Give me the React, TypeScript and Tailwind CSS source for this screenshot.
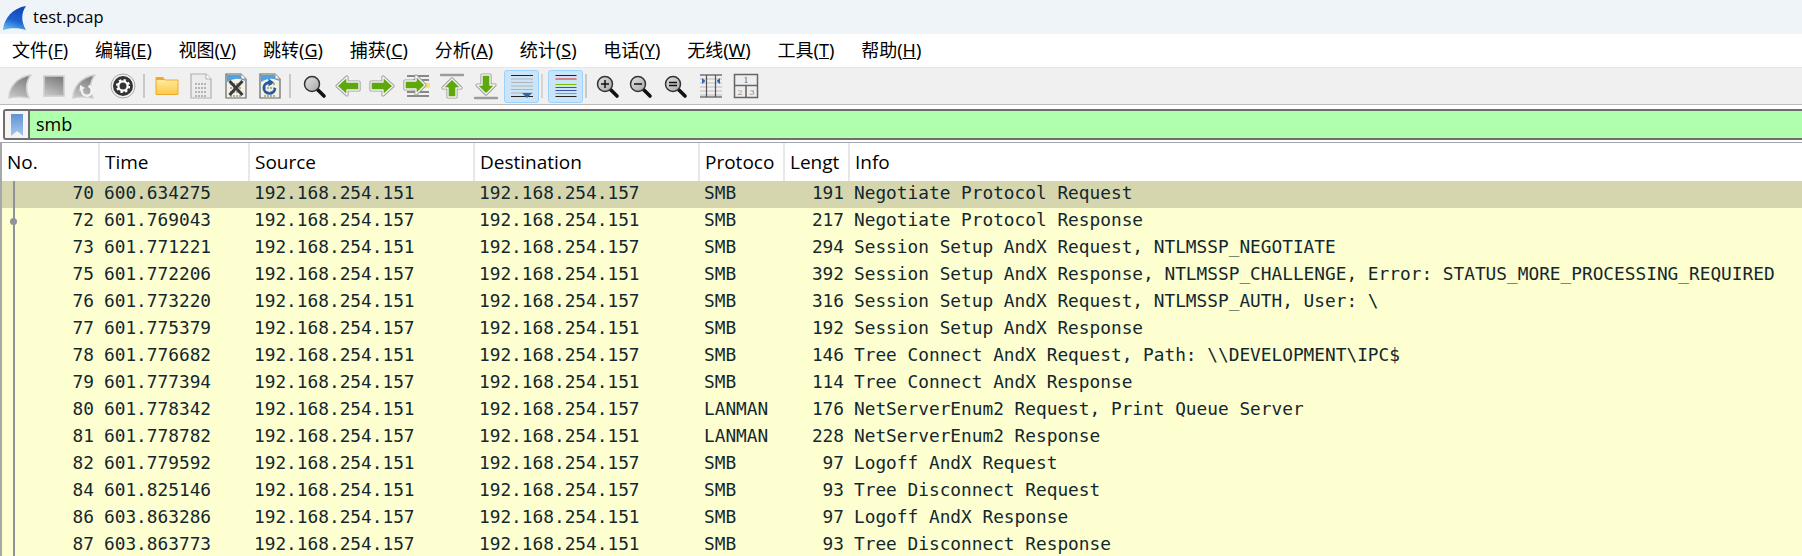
import type { ReactNode } from 'react'

const rows = [
  ['70', '600.634275', '192.168.254.151', '192.168.254.157', 'SMB', '191', 'Negotiate Protocol Request'],
  ['72', '601.769043', '192.168.254.157', '192.168.254.151', 'SMB', '217', 'Negotiate Protocol Response'],
  ['73', '601.771221', '192.168.254.151', '192.168.254.157', 'SMB', '294', 'Session Setup AndX Request, NTLMSSP_NEGOTIATE'],
  ['75', '601.772206', '192.168.254.157', '192.168.254.151', 'SMB', '392', 'Session Setup AndX Response, NTLMSSP_CHALLENGE, Error: STATUS_MORE_PROCESSING_REQUIRED'],
  ['76', '601.773220', '192.168.254.151', '192.168.254.157', 'SMB', '316', 'Session Setup AndX Request, NTLMSSP_AUTH, User: \\'],
  ['77', '601.775379', '192.168.254.157', '192.168.254.151', 'SMB', '192', 'Session Setup AndX Response'],
  ['78', '601.776682', '192.168.254.151', '192.168.254.157', 'SMB', '146', 'Tree Connect AndX Request, Path: \\\\DEVELOPMENT\\IPC$'],
  ['79', '601.777394', '192.168.254.157', '192.168.254.151', 'SMB', '114', 'Tree Connect AndX Response'],
  ['80', '601.778342', '192.168.254.151', '192.168.254.157', 'LANMAN', '176', 'NetServerEnum2 Request, Print Queue Server'],
  ['81', '601.778782', '192.168.254.157', '192.168.254.151', 'LANMAN', '228', 'NetServerEnum2 Response'],
  ['82', '601.779592', '192.168.254.151', '192.168.254.157', 'SMB', '97', 'Logoff AndX Request'],
  ['84', '601.825146', '192.168.254.151', '192.168.254.157', 'SMB', '93', 'Tree Disconnect Request'],
  ['86', '603.863286', '192.168.254.157', '192.168.254.151', 'SMB', '97', 'Logoff AndX Response'],
  ['87', '603.863773', '192.168.254.157', '192.168.254.151', 'SMB', '93', 'Tree Disconnect Response'],
]

const menus = [
  ['文件', 'F'],
  ['编辑', 'E'],
  ['视图', 'V'],
  ['跳转', 'G'],
  ['捕获', 'C'],
  ['分析', 'A'],
  ['统计', 'S'],
  ['电话', 'Y'],
  ['无线', 'W'],
  ['工具', 'T'],
  ['帮助', 'H'],
]

const Svg = ({ children }: { children: ReactNode }) => (
  <svg width="28" height="28" viewBox="0 0 28 28" fill="none">
    <defs>
      <linearGradient id="grey" x1="0.7" y1="0" x2="0.3" y2="1">
        <stop offset="0" stopColor="#7c7c7c" />
        <stop offset="1" stopColor="#c4c4c4" />
      </linearGradient>
      <linearGradient id="folder" x1="0" y1="0" x2="0" y2="1">
        <stop offset="0" stopColor="#fff0a8" />
        <stop offset="1" stopColor="#fcc84a" />
      </linearGradient>
      <linearGradient id="lens" x1="0" y1="0" x2="1" y2="1">
        <stop offset="0" stopColor="#e2e2e2" />
        <stop offset="1" stopColor="#a8a8a8" />
      </linearGradient>
    </defs>
    {children}
  </svg>
)

const Fin = () => (
  <path d="M3 26C3 15 11 5 25 3C20 9 19 18 23 26C16 24.5 9 24.5 3 26Z" fill="url(#grey)" stroke="#cfcfcf" strokeWidth="1.4" strokeLinejoin="round" />
)

const Magnifier = ({ children }: { children?: ReactNode }) => (
  <Svg>
    <path d="M18 18L24 24" stroke="#111" strokeWidth="3.6" strokeLinecap="round" />
    <circle cx="12" cy="12" r="7.5" fill="url(#lens)" stroke="#333" strokeWidth="1.5" />
    {children}
  </Svg>
)

const Arrow = ({ d }: { d: string }) => (
  <>
    <path d={d} stroke="#9c9c9c" strokeWidth="3.2" strokeLinejoin="round" />
    <path d={d} fill="#5ea80e" stroke="#f2f2f2" strokeWidth="1.4" strokeLinejoin="round" />
  </>
)

const Digits = ({ color }: { color: string }) => (
  <path d="M8 12H20M8 16H20M8 20H20M8 24H20" stroke={color} strokeWidth="2" strokeDasharray="2 1" />
)

const DocBlue = () => (
  <>
    <path d="M4 2H19L24 7V26H4Z" fill="#f1f1e6" stroke="#666" strokeWidth="1.2" />
    <path d="M5 3H18L23 8V9C18 6 12 6 5 10Z" fill="#4ea2e6" />
    <path d="M19 2V7H24" fill="#fff" stroke="#888" strokeWidth="1" />
  </>
)

const Button = ({ children, className = 'w-[30px]', active }: { children?: ReactNode; className?: string; active?: boolean }) => (
  <div
    className={`${className} h-[33px] shrink-0 flex items-center justify-center rounded-[3px] border ${
      active ? 'bg-[#cce4f7] border-[#99d1ff]' : 'border-transparent'
    }`}
  >
    {children}
  </div>
)

const Toolbar = () => (
  <div className="h-[38px] mt-[1px] bg-[#f0f0f0] border-t border-t-[#e6e6e6] border-b border-b-[#bcbcbc] flex items-center pl-[5px]">
    <Button>
      <Svg>
        <Fin />
      </Svg>
    </Button>
    <Button className="w-[30px] ml-[4px]">
      <Svg>
        <rect x="4" y="4" width="20" height="20" fill="url(#grey)" stroke="#cfcfcf" strokeWidth="1.6" />
      </Svg>
    </Button>
    <Button>
      <Svg>
        <Fin />
        <path d="M18.5 14A5 5 0 1 1 12 18" stroke="#f4f4f4" strokeWidth="2.4" />
        <path d="M10 13L15 16L9.5 19.5Z" fill="#f4f4f4" />
      </Svg>
    </Button>
    <Button className="w-[30px] ml-[9px]">
      <Svg>
        <circle cx="14" cy="14" r="12" fill="#f2f2f2" stroke="#a8a8a8" strokeWidth="1" />
        <circle cx="14" cy="14" r="10" fill="#333" />
        <circle cx="14" cy="14" r="4.6" stroke="#fff" strokeWidth="2.2" />
        <circle cx="14" cy="14" r="6.2" stroke="#fff" strokeWidth="1.8" strokeDasharray="2.4 2.45" />
      </Svg>
    </Button>
    <div className="w-[2px] h-[24px] bg-[#c8c8c8] shrink-0 ml-[5px]" />
    <Button className="w-[30px] ml-[7px]">
      <Svg>
        <path d="M3 5.5H10L12 8H25V22.5H3Z" fill="url(#folder)" stroke="#eeaa2c" strokeWidth="1" />
        <path d="M3 5.5H10L12 8H3Z" fill="#efa92a" />
      </Svg>
    </Button>
    <Button className="w-[30px] ml-[4px]">
      <Svg>
        <path d="M4 2H19L24 7V26H4Z" fill="#ececec" stroke="#b0b0b0" strokeWidth="1.2" />
        <path d="M19 2V7H24" fill="#fff" stroke="#b0b0b0" strokeWidth="1" />
        <Digits color="#b4b4b4" />
      </Svg>
    </Button>
    <Button className="w-[30px] ml-[5px]">
      <Svg>
        <DocBlue />
        <Digits color="#b0b098" />
        <path d="M7.5 9L20.5 23M20.5 9L7.5 23" stroke="#3a3a3a" strokeWidth="3" />
      </Svg>
    </Button>
    <Button className="w-[30px] ml-[4px]">
      <Svg>
        <DocBlue />
        <Digits color="#b0b098" />
        <path d="M19 16A5.6 5.6 0 1 1 14 10.4" stroke="#27599f" strokeWidth="2.6" />
        <path d="M12.5 6.5L18 10.5L12.5 14.5Z" fill="#27599f" />
      </Svg>
    </Button>
    <div className="w-[2px] h-[24px] bg-[#c8c8c8] shrink-0 ml-[4px]" />
    <Button className="w-[30px] ml-[8px]">
      <Magnifier />
    </Button>
    <Button className="w-[30px] ml-[4px]">
      <Svg>
        <Arrow d="M3 14L13 5V10H25V18H13V23Z" />
      </Svg>
    </Button>
    <Button className="w-[30px] ml-[4px]">
      <Svg>
        <Arrow d="M25 14L15 5V10H3V18H15V23Z" />
      </Svg>
    </Button>
    <Button className="w-[30px] ml-[5px]">
      <Svg>
        <path d="M4 4H26M10 8H26M4 20H26M4 24H26" stroke="#222" strokeWidth="1.2" />
        <rect x="20" y="11" width="7" height="5" fill="#fbe36a" />
        <Arrow d="M22 13L13 4V9H2V17H13V22Z" />
      </Svg>
    </Button>
    <Button className="w-[30px] ml-[5px]">
      <Svg>
        <path d="M3 3H25" stroke="#9c9c9c" strokeWidth="2.4" strokeLinecap="round" />
        <Arrow d="M14 7L23 16H18V25H10V16H5Z" />
      </Svg>
    </Button>
    <Button className="w-[30px] ml-[4px]">
      <Svg>
        <path d="M3 26H25" stroke="#9c9c9c" strokeWidth="2.4" strokeLinecap="round" />
        <Arrow d="M14 22L23 13H18V3H10V13H5Z" />
      </Svg>
    </Button>
    <Button className="w-[35px] ml-[3px]" active>
      <Svg>
        <path d="M3 3.5H25M3 24.5H25" stroke="#222" strokeWidth="1" />
        <path d="M3 7H25M3 10.5H25M3 14H25M3 17.5H25M3 21H25" stroke="#b4b4b4" strokeWidth="1" />
        <path d="M14 21H24L19 26Z" fill="#2f65ad" />
      </Svg>
    </Button>
    <div className="w-[2px] h-[24px] bg-[#d4d4d4] shrink-0 ml-[2px]" />
    <Button className="w-[35px] ml-[5px]" active>
      <Svg>
        <path d="M3.5 3.5H24.5M3.5 24.5H24.5" stroke="#222" strokeWidth="1" />
        <path d="M3.5 7H24.5" stroke="#e32020" strokeWidth="1" />
        <path d="M3.5 12.5H24.5" stroke="#78c000" strokeWidth="1" />
        <path d="M3.5 15.5H24.5" stroke="#555" strokeWidth="1" />
        <path d="M3.5 18.5H24.5" stroke="#3a50a8" strokeWidth="1" />
        <path d="M3.5 21.5H24.5" stroke="#c89620" strokeWidth="1" />
      </Svg>
    </Button>
    <div className="w-[2px] h-[24px] bg-[#c8c8c8] shrink-0 ml-[2px]" />
    <Button className="w-[30px] ml-[5px]">
      <Magnifier>
        <path d="M8 12H16M12 8V16" stroke="#111" strokeWidth="1.5" />
      </Magnifier>
    </Button>
    <Button className="w-[30px] ml-[3px]">
      <Magnifier>
        <path d="M8 12H16" stroke="#111" strokeWidth="1.5" />
      </Magnifier>
    </Button>
    <Button className="w-[30px] ml-[5px]">
      <Magnifier>
        <path d="M8 10.5H16M8 13.5H16" stroke="#111" strokeWidth="1.4" />
      </Magnifier>
    </Button>
    <Button className="w-[30px] ml-[6px]">
      <Svg>
        <path d="M3 3H25M3 25H25" stroke="#333" strokeWidth="1.2" />
        <path d="M3 7H25M3 11H25M3 15H25M3 19H25M3 23H25" stroke="#bbb" strokeWidth="1" />
        <path d="M9.5 3V25M18.5 3V25" stroke="#555" strokeWidth="1.2" />
        <path d="M5 6V12L8.5 9ZM23 6V12L19.5 9Z" fill="#2f65ad" />
      </Svg>
    </Button>
    <Button className="w-[30px] ml-[5px]">
      <Svg>
        <rect x="2.5" y="2.5" width="23" height="23" fill="#eee" stroke="#666" strokeWidth="1.5" />
        <path d="M2.5 13.5H25.5M14 13.5V25.5" stroke="#666" strokeWidth="1.6" />
        <text x="14" y="11" fontSize="8" fill="#666" textAnchor="middle" fontFamily="'DejaVu Serif', serif">1</text>
        <text x="8" y="23" fontSize="8" fill="#888" textAnchor="middle" fontFamily="'DejaVu Serif', serif">2</text>
        <text x="20" y="23" fontSize="8" fill="#888" textAnchor="middle" fontFamily="'DejaVu Serif', serif">3</text>
      </Svg>
    </Button>
  </div>
)

const headers = [
  ['No.', 'w-[98px]'],
  ['Time', 'w-[150px]'],
  ['Source', 'w-[225px]'],
  ['Destination', 'w-[225px]'],
  ['Protoco', 'w-[85px]'],
  ['Lengt', 'w-[65px]'],
  ['Info', 'flex-1'],
]

const App = () => {
  return (
    <div className="w-[1802px] h-[556px] overflow-hidden bg-white font-['Noto_Sans','Noto_Sans_CJK_SC',sans-serif] text-black">
      {/* Title bar */}
      <div className="h-[34px] bg-[#eff4f9] flex items-center pl-[2px] gap-[7px]">
        <svg width="24" height="28" viewBox="0 0 24 28">
          <defs>
            <linearGradient id="shark" x1="0.7" y1="0" x2="0.4" y2="1">
              <stop offset="0" stopColor="#0f45b4" />
              <stop offset="0.6" stopColor="#1c62d0" />
              <stop offset="1" stopColor="#5fb0ee" />
            </linearGradient>
          </defs>
          <path d="M1 27C2 15 11 5 24 3C19 10 19 19 24 27C17 24.5 8 24.5 1 27Z" fill="url(#shark)" />
        </svg>
        <span className="text-[16.5px] font-['Open_Sans',sans-serif]">test.pcap</span>
      </div>

      {/* Menu */}
      <div className="h-[32px] flex items-center text-[18px] pl-[12px] gap-[26.8px]">
        {menus.map(([label, key]) => (
          <span key={key} className="whitespace-nowrap">
            {label}(<span className="underline">{key}</span>)
          </span>
        ))}
      </div>

      <Toolbar />

      {/* Display filter */}
      <div className="h-[37px] pt-[4px] pl-[3px] bg-white">
        <div className="h-[31px] flex border-y-2 border-l-2 border-[#6e6e6e] rounded-l-[3px] bg-[#afffaf] overflow-hidden">
          <div className="w-[25px] bg-[#f4f4f4] border-r-2 border-[#6e6e6e] flex items-center justify-center">
            <svg width="14" height="22" viewBox="0 0 14 22">
              <defs>
                <linearGradient id="mark" x1="0" y1="0" x2="0" y2="1">
                  <stop offset="0" stopColor="#5f93d4" />
                  <stop offset="1" stopColor="#a8c8ec" />
                </linearGradient>
              </defs>
              <path d="M1 0H13V22L7 17L1 22Z" fill="url(#mark)" />
            </svg>
          </div>
          <span className="pl-[6px] text-[18px] leading-[27px] font-['Open_Sans',sans-serif]">smb</span>
        </div>
      </div>

      {/* Packet list */}
      <div className="border-l-2 border-[#a8a8a8]">
        <div className="h-[39px] flex items-center bg-white border-t border-[#a4a4ac] text-[19px] font-['Open_Sans',sans-serif]">
          {headers.map(([name, w]) => (
            <div key={name} className={`${w} h-full pl-[5px] flex items-center border-r-2 border-[#e8e8e8] last:border-r-0 whitespace-nowrap overflow-hidden`}>
              {name}
            </div>
          ))}
        </div>
        <div className="font-['DejaVu_Sans_Mono',monospace] text-[17.8px] text-[#12272e]">
          {rows.map((row, i) => (
            <div key={row[0]} className={`relative h-[27px] pb-[2px] flex items-center whitespace-pre ${i === 0 ? 'bg-[#d6d6ae]' : 'bg-[#feffd0]'}`}>
              <span className="absolute left-[11px] top-0 bottom-0 w-[2px] bg-[#8e939a]" />
              {i === 1 && <span className="absolute left-[8px] top-[10px] w-[7px] h-[7px] rounded-full bg-[#8e939a]" />}
              <span className="w-[92px] text-right">{row[0]}</span>
              <span className="w-[150px] ml-[10px]">{row[1]}</span>
              <span className="w-[225px]">{row[2]}</span>
              <span className="w-[225px]">{row[3]}</span>
              <span className="w-[85px]">{row[4]}</span>
              <span className="w-[55px] text-right">{row[5]}</span>
              <span className="ml-[10px]">{row[6]}</span>
            </div>
          ))}
        </div>
      </div>
    </div>
  )
}

export default App
